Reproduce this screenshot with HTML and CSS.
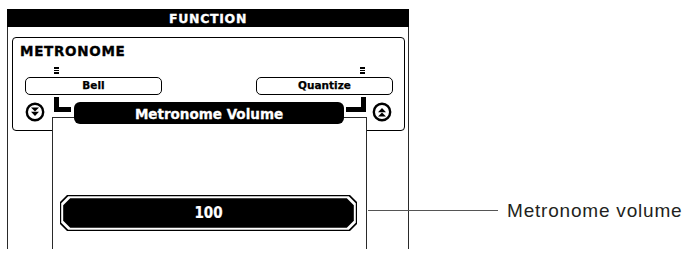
FILE: index.html
```html
<!DOCTYPE html>
<html>
<head>
<meta charset="utf-8">
<link rel="stylesheet" href="styles.css">
</head>
<body>
<div class="page">
  <div class="lcd">
    <div class="header">FUNCTION</div>
    <div class="panel">
      <div class="title">METRONOME</div>
      <div class="options">
        <div class="opt opt-left">
          <div class="mark"></div>
          <div class="optbox">Bell</div>
        </div>
        <div class="opt opt-right">
          <div class="mark"></div>
          <div class="optbox">Quantize</div>
        </div>
      </div>
      <div class="nav">
        <svg class="icon" viewBox="0 0 20 20" width="20" height="20">
          <circle cx="10" cy="10" r="8.2" fill="none" stroke="#000" stroke-width="2.4"/>
          <polygon points="6,5.6 14,5.6 10,9.6" fill="#000"/>
          <polygon points="6,9.8 14,9.8 10,14" fill="#000"/>
        </svg>
        <div class="conn conn-left"></div>
        <div class="bar">Metronome Volume</div>
        <div class="conn conn-right"></div>
        <svg class="icon icon-right" viewBox="0 0 20 20" width="20" height="20">
          <circle cx="10" cy="10" r="8.2" fill="none" stroke="#000" stroke-width="2.4"/>
          <polygon points="6,10.2 14,10.2 10,6" fill="#000"/>
          <polygon points="6,14.4 14,14.4 10,10.4" fill="#000"/>
        </svg>
      </div>
    </div>
    <div class="lower">
      <div class="val">
        <div class="val-gap">
          <div class="val-in">100</div>
        </div>
      </div>
    </div>
  </div>
  <div class="callout">
    <div class="lead-line"></div>
    <div class="label">Metronome volume</div>
  </div>
</div>
</body>
</html>
```
FILE: styles.css
```css
html, body {
  margin: 0;
  padding: 0;
  background: #fff;
}

.page {
  display: flex;
  align-items: flex-start;
  width: 687px;
  height: 254px;
  box-sizing: border-box;
  padding: 9px 0 0 7px;
  overflow: hidden;
  font-family: "DejaVu Sans", sans-serif;
}

.lcd {
  width: 402px;
  height: 240px;
  box-sizing: border-box;
  border-left: 1px solid #2a2a2a;
  border-right: 1px solid #2a2a2a;
  display: flex;
  flex-direction: column;
  flex-shrink: 0;
}

.header {
  margin: 0 -1px;
  height: 18px;
  box-sizing: border-box;
  padding-top: 2px;
  background: #000;
  color: #fff;
  font-weight: bold;
  font-size: 12.5px;
  letter-spacing: 0.7px;
  line-height: 16px;
  text-align: center;
  -webkit-text-stroke: 0.3px #fff;
}

.panel {
  margin: 10px 3px 0 4px;
  height: 94px;
  box-sizing: border-box;
  border: 1px solid #000;
  border-radius: 4px;
  flex-shrink: 0;
}

.title {
  padding: 6px 0 0 7px;
  font-size: 13.5px;
  font-weight: bold;
  letter-spacing: 0.7px;
  line-height: 14px;
  color: #000;
  -webkit-text-stroke: 0.35px #000;
}

.options {
  display: flex;
  justify-content: space-between;
  padding: 0 11px 0 12px;
  margin-top: 9px;
}

.opt {
  display: flex;
  flex-direction: column;
}

.mark {
  width: 5px;
  height: 7px;
  margin-bottom: 3px;
  background: repeating-linear-gradient(to bottom, #000 0 1.5px, transparent 1.5px 2.6px);
}

.opt-left .mark { margin-left: 29px; }
.opt-right .mark { margin-left: 104px; }

.optbox {
  width: 137px;
  height: 18px;
  box-sizing: border-box;
  border: 1.5px solid #000;
  border-radius: 5px;
  text-align: center;
  font-size: 10.5px;
  font-weight: bold;
  line-height: 15px;
  color: #000;
  -webkit-text-stroke: 0.25px #000;
}

.nav {
  display: flex;
  align-items: flex-start;
  margin-top: 2px;
}

.icon {
  display: block;
  margin: 5px 0 0 12px;
  flex-shrink: 0;
}

.icon-right {
  margin-left: 6px;
}

.conn {
  width: 17px;
  height: 15px;
  box-sizing: border-box;
  border-bottom: 5px solid #000;
  flex-shrink: 0;
}

.conn-left {
  margin-left: 9px;
  border-left: 5px solid #000;
}

.conn-right {
  margin-left: 2px;
  width: 20px;
  border-right: 5px solid #000;
}

.bar {
  position: relative;
  z-index: 2;
  margin: 5px 0 0 3px;
  width: 270px;
  height: 22px;
  box-sizing: border-box;
  padding-top: 3px;
  background: #000;
  border-radius: 6px;
  color: #fff;
  font-size: 13.5px;
  font-weight: bold;
  line-height: 19px;
  text-align: center;
  flex-shrink: 0;
  -webkit-text-stroke: 0.3px #fff;
}

.lower {
  position: relative;
  z-index: 1;
  margin: -14px 0 0 44px;
  width: 315px;
  flex: 1;
  box-sizing: border-box;
  background: #fff;
  border-top: 1px solid #2a2a2a;
  border-left: 1px solid #2a2a2a;
  border-right: 1px solid #2a2a2a;
}

.val,
.val-gap,
.val-in {
  clip-path: polygon(7px 0, calc(100% - 7px) 0, 100% 7px, 100% calc(100% - 7px), calc(100% - 7px) 100%, 7px 100%, 0 calc(100% - 7px), 0 7px);
}

.val {
  margin: 77px 0 0 7px;
  width: 297px;
  height: 36px;
  box-sizing: border-box;
  padding: 1.2px;
  background: #000;
}

.val-gap {
  height: 100%;
  box-sizing: border-box;
  padding: 2px;
  background: #fff;
}

.val-in {
  height: 100%;
  background: #000;
  color: #fff;
  display: flex;
  align-items: center;
  justify-content: center;
  font-family: "DejaVu Sans Condensed", "DejaVu Sans", sans-serif;
  font-stretch: condensed;
  font-weight: bold;
  font-size: 15px;
  -webkit-text-stroke: 0.2px #fff;
}

.callout {
  display: flex;
  align-items: center;
  height: 21px;
  margin-top: 191px;
}

.lead-line {
  width: 130px;
  height: 1px;
  margin-left: -41px;
  background: #555;
  flex-shrink: 0;
}

.label {
  margin-left: 9px;
  font-family: "Liberation Sans", Arial, sans-serif;
  font-size: 19px;
  letter-spacing: 0.8px;
  line-height: 21px;
  color: #231f20;
  white-space: nowrap;
}
```
